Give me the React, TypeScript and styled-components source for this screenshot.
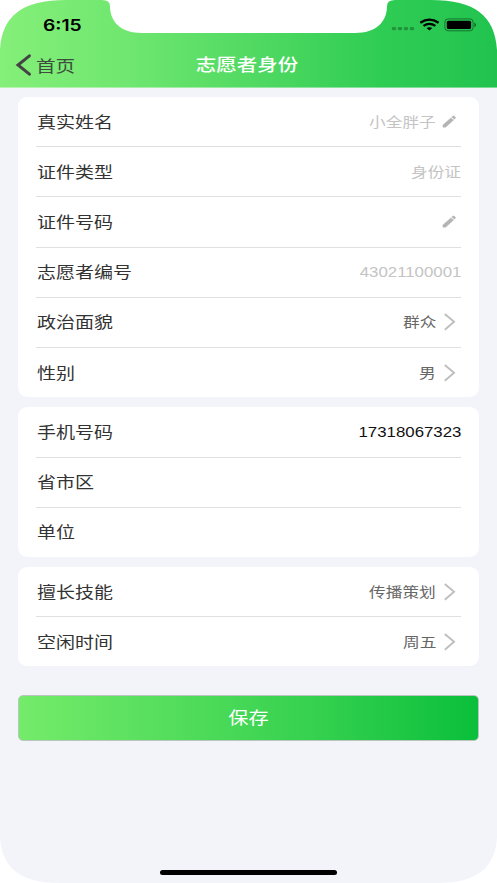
import React from "react";
import styled, { createGlobalStyle } from "styled-components";

const GlobalStyle = createGlobalStyle`
  * { box-sizing: border-box; }
  body { margin: 0; background: #fff; }
`;

const WIDE = 1.219;

const Screen = styled.div`
  position: relative;
  width: 497px;
  height: 883px;
  overflow: hidden;
  display: flex;
  flex-direction: column;
  background: #f3f4f9;
  font-family: "Liberation Sans", "Noto Sans CJK SC", sans-serif;
`;

const Header = styled.header`
  height: 87.5px;
  flex: none;
  display: flex;
  flex-direction: column;
  background: linear-gradient(90deg, #84ef79 0%, #70e770 25%, #52da63 50%, #30cd54 76%, #21c34f 100%);
  border-bottom: 1px solid rgba(255, 255, 255, 0.4);
`;

const StatusBar = styled.div`
  height: 49px;
  padding: 0 21px 0 43px;
  display: flex;
  justify-content: space-between;
  align-items: center;
`;

const Clock = styled.span`
  font: 600 15.8px/20px Inter, sans-serif;
  color: #000;
  padding-top: 2px;
  transform: scaleX(1.22);
  transform-origin: left center;
`;

const NavBar = styled.nav`
  height: 38px;
  padding: 0 17.5px 0 14.5px;
  display: grid;
  grid-template-columns: 1fr auto 1fr;
  align-items: center;
  margin-top: -3px;
`;

const Back = styled.div`
  display: flex;
  align-items: center;
  gap: 5px;
`;

type TextProps = { $size: number; $color: string; $origin?: string; $weight?: number };

const Text = styled.span<TextProps>`
  font-size: ${(p) => p.$size}px;
  font-weight: ${(p) => p.$weight ?? 400};
  line-height: 24px;
  color: ${(p) => p.$color};
  white-space: nowrap;
  padding-top: 2px;
  transform: scaleX(${WIDE});
  transform-origin: ${(p) => p.$origin ?? "left"} center;
`;

const Content = styled.main`
  padding: 9.5px 18px 0;
  display: flex;
  flex-direction: column;
  gap: 10.2px;
`;

const Card = styled.section`
  background: #fff;
  border-radius: 9px;
  padding: 0 18px;
`;

const Row = styled.div`
  height: 50.2px;
  display: flex;
  align-items: center;
  justify-content: space-between;
  border-bottom: 1.2px solid #e0e0e0;
  padding-left: 0.5px;
  &:last-child {
    height: 49.2px;
    border-bottom: 0;
  }
`;

const Value = styled.div`
  display: flex;
  align-items: center;
  gap: 6px;
`;

const IconSlot = styled.span`
  width: 19px;
  height: 20px;
  display: flex;
`;

const SaveButton = styled.button`
  height: 46px;
  margin-top: 18.4px;
  padding: 0;
  border: 1.5px solid #b9c5bd;
  border-radius: 5px;
  background: linear-gradient(90deg, #75eb6a, #35d14f 64%, #0abf3b) border-box;
  display: flex;
  align-items: center;
  justify-content: center;
  font-family: inherit;
`;

const Frame = styled.svg`
  position: absolute;
  inset: 0;
  pointer-events: none;
`;

const HomeIndicator = styled.div`
  position: absolute;
  left: 160px;
  bottom: 8px;
  width: 177px;
  height: 5px;
  border-radius: 3px;
  background: #000;
`;

type Item = { label: string; value?: string; tone?: "muted" | "normal" | "strong"; icon?: "edit" | "arrow" };

const groups: Item[][] = [
  [
    { label: "真实姓名", value: "小全胖子", tone: "muted", icon: "edit" },
    { label: "证件类型", value: "身份证", tone: "muted" },
    { label: "证件号码", icon: "edit" },
    { label: "志愿者编号", value: "43021100001", tone: "muted" },
    { label: "政治面貌", value: "群众", icon: "arrow" },
    { label: "性别", value: "男", icon: "arrow" },
  ],
  [
    { label: "手机号码", value: "17318067323", tone: "strong" },
    { label: "省市区" },
    { label: "单位" },
  ],
  [
    { label: "擅长技能", value: "传播策划", icon: "arrow" },
    { label: "空闲时间", value: "周五", icon: "arrow" },
  ],
];

const tones = { muted: "#c4c4c4", normal: "#666", strong: "#111" };

const EditIcon = () => (
  <svg width="19" height="20" viewBox="0 0 19 20">
    <path d="M.9 15.2V12.9L8.8 5.9l2.8 2.2-7.9 7.1zM9.7 5.1l1.2-1q.6-.4 1.2 0l1.3 1.1q.6.5 0 1l-1.1 1z" fill="#b4b4b4" stroke="#b4b4b4" strokeWidth=".4" />
  </svg>
);

const ArrowIcon = () => (
  <svg width="19" height="20" viewBox="0 0 19 20">
    <path d="M2.8 2 12.1 9.8 2.8 17.8" fill="none" stroke="#bdbdbd" strokeWidth="1.8" />
  </svg>
);

const StatusIcons = () => (
  <svg width="86" height="16" viewBox="390 17 86 16">
    <g fill="#000" fillOpacity=".27">
      {[391.8, 397.8, 403.8, 409.8].map((x) => (
        <rect key={x} x={x} y="26.9" width="4.3" height="3.4" rx="1.2" />
      ))}
    </g>
    <g fill="none" stroke="#000" strokeWidth="2.3">
      <path d="M420.3 22.8Q429.4 16.5 438.6 22.8" />
      <path d="M423.5 25.9Q429.4 21.9 435.4 25.9" />
    </g>
    <path d="M426.5 28.1Q429.4 26.3 432.3 28.1L429.4 30.5z" />
    <rect x="444.9" y="18.9" width="28.2" height="11.9" rx="3.2" fill="none" stroke="#000" strokeOpacity=".42" />
    <rect x="446.8" y="20.7" width="24.3" height="8.4" rx="1.6" />
    <path d="M474.4 22.8Q476 23.4 476 24.9T474.4 27z" fillOpacity=".5" />
  </svg>
);

export default function App() {
  return (
    <>
      <GlobalStyle />
      <Screen>
        <Header>
          <StatusBar>
            <Clock>6:15</Clock>
            <StatusIcons />
          </StatusBar>
          <NavBar>
            <Back>
              <svg width="16" height="22" viewBox="0 0 16 22">
                <path d="M14.4 1.8 3 11 14.4 20.2" fill="none" stroke="#444" strokeWidth="3" strokeLinecap="round" />
              </svg>
              <Text $size={16.1} $color="#3d4d3d">首页</Text>
            </Back>
            <Text $size={16.8} $color="#fff" $origin="center" $weight={500}>志愿者身份</Text>
          </NavBar>
        </Header>
        <Content>
          {groups.map((items, i) => (
            <Card key={i}>
              {items.map(({ label, value, tone = "normal", icon }) => (
                <Row key={label}>
                  <Text $size={15.6} $color="#333">{label}</Text>
                  <Value>
                    {value && (
                      <Text $size={/^\d+$/.test(value) ? 13.8 : 13.7} $color={tones[tone]} $origin="right">
                        {value}
                      </Text>
                    )}
                    {icon && <IconSlot>{icon === "edit" ? <EditIcon /> : <ArrowIcon />}</IconSlot>}
                  </Value>
                </Row>
              ))}
            </Card>
          ))}
          <SaveButton>
            <Text $size={16.6} $color="#fff" $origin="center">保存</Text>
          </SaveButton>
        </Content>
        <Frame width="497" height="883" viewBox="0 0 497 883" fill="#fff">
          <path d="M0 0V50C2 16 22 0 66 0z" />
          <path d="M497 0V50C495 16 475 0 431 0z" />
          <path d="M102 0Q110 0 110 6C110 22 121 33 142 33H355C376 33 387 22 387 6Q387 0 395 0z" />
          <path d="M0 883V838C2 866 18 883 60 883z" />
          <path d="M497 883V838C495 866 479 883 437 883z" />
        </Frame>
        <HomeIndicator />
      </Screen>
    </>
  );
}
